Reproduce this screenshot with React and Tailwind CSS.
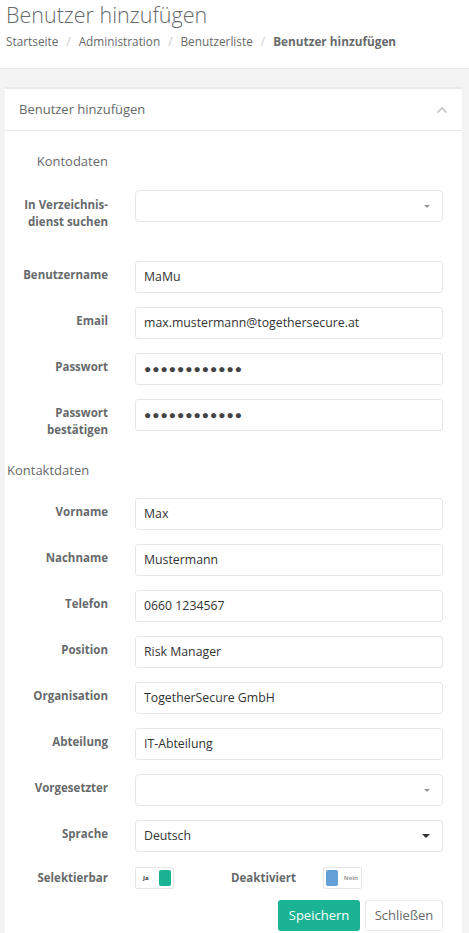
import React from "react";

const font = { fontFamily: '"Open Sans", "Noto Sans", sans-serif' };

function Label({ children, className = "" }) {
  return (
    <div className={"w-[86px] shrink-0 text-right text-[11.5px] font-bold leading-[17px] text-[#676a6c] pt-[5px] whitespace-nowrap " + className}>
      {children}
    </div>
  );
}

function Input({ value, password }) {
  return (
    <div className="flex-1 h-[32px] border border-[#e5e6e7] rounded-[3px] bg-white flex items-center px-[8px] text-[12.3px] text-[#333]">
      {password ? (
        <span className="tracking-[1px] text-[#444] text-[12px]">●●●●●●●●●●●●</span>
      ) : (
        value
      )}
    </div>
  );
}

function Row({ label, children, className = "" }) {
  return (
    <div className={"flex gap-[27px] " + className}>
      <Label>{label}</Label>
      {children}
    </div>
  );
}

function Select({ value, dark }) {
  return (
    <div className="flex-1 h-[32px] border border-[#e5e6e7] rounded-[4px] bg-white flex items-center justify-between pl-[8px] pr-[12px] text-[12.3px] text-[#333]">
      <span>{value}</span>
      {dark ? (
        <span className="w-0 h-0 border-l-[4px] border-r-[4px] border-t-[4px] border-l-transparent border-r-transparent border-t-[#333]"></span>
      ) : (
        <span className="w-0 h-0 border-l-[3px] border-r-[3px] border-t-[3px] border-l-transparent border-r-transparent border-t-[#999]"></span>
      )}
    </div>
  );
}

export default function App() {
  return (
    <div style={font} className="w-[469px] min-h-[933px] bg-[#f3f3f4]">
      <div className="bg-white border-b border-[#e7eaec] h-[69px] px-[6px]">
        <h2 className="text-[21.5px] font-light text-[#676a6c] leading-[28px] pt-[1px]">Benutzer hinzufügen</h2>
        <div className="flex items-center text-[11.8px] text-[#676a6c] mt-[4px] leading-[16px]">
          <span>Startseite</span>
          <span className="px-[8px] text-[#ccc]">/</span>
          <span>Administration</span>
          <span className="px-[8px] text-[#ccc]">/</span>
          <span>Benutzerliste</span>
          <span className="px-[8px] text-[#ccc]">/</span>
          <span className="font-bold">Benutzer hinzufügen</span>
        </div>
      </div>
      <div className="ml-[5px] mr-[7px] mt-[18px] bg-white border-t-[2px] border-[#e7eaec]">
        <div className="h-[42px] border-b border-[#e7eaec] flex items-center justify-between pl-[14px] pr-[14px]">
          <span className="text-[13px] text-[#676a6c]">Benutzer hinzufügen</span>
          <svg width="12" height="8" viewBox="0 0 12 8" fill="none">
            <path d="M1.5 6.5L6 2l4.5 4.5" stroke="#c4c4c4" strokeWidth="1.6" />
          </svg>
        </div>
        <div className="pl-[17px] pr-[19px] pt-[20px] pb-[3px]">
          <div className="flex gap-[27px]">
            <div className="w-[86px] shrink-0 text-right text-[13px] text-[#676a6c] leading-[20px]">Kontodaten</div>
          </div>
          <div className="flex gap-[27px] mt-[19px]">
            <Label className="pt-[6px]">In Verzeichnis-<br />dienst suchen</Label>
            <Select value="" />
          </div>
          <Row label="Benutzername" className="mt-[31px]"><Input value="MaMu" /></Row>
          <Row label="Email" className="mt-[14px]"><Input value="max.mustermann@togethersecure.at" /></Row>
          <Row label="Passwort" className="mt-[14px]"><Input password /></Row>
          <Row label={<>Passwort<br />bestätigen</>} className="mt-[14px]"><Input password /></Row>
          <div className="mt-[22px] -ml-[15px] text-[13px] text-[#676a6c] leading-[20px]">Kontaktdaten</div>
          <Row label="Vorname" className="mt-[18px]"><Input value="Max" /></Row>
          <Row label="Nachname" className="mt-[14px]"><Input value="Mustermann" /></Row>
          <Row label="Telefon" className="mt-[14px]"><Input value="0660 1234567" /></Row>
          <Row label="Position" className="mt-[14px]"><Input value="Risk Manager" /></Row>
          <Row label="Organisation" className="mt-[14px]"><Input value="TogetherSecure GmbH" /></Row>
          <Row label="Abteilung" className="mt-[14px]"><Input value="IT-Abteilung" /></Row>
          <Row label="Vorgesetzter" className="mt-[14px]"><Select value="" /></Row>
          <Row label="Sprache" className="mt-[14px]"><Select value="Deutsch" dark /></Row>
          <div className="flex gap-[27px] mt-[15px] items-center">
            <div className="w-[86px] shrink-0 text-right text-[11.5px] font-bold text-[#676a6c]">Selektierbar</div>
            <div className="w-[39px] h-[22px] border border-[#e5e6e7] rounded-[2px] flex items-center justify-between pl-[7px] pr-[2px]">
              <span className="text-[6px] font-bold text-[#333]">Ja</span>
              <span className="w-[12px] h-[16px] rounded-[2px] bg-[#1ab394]"></span>
            </div>
            <div className="w-[68px] text-right text-[11.5px] font-bold text-[#676a6c] ml-[27px]">Deaktiviert</div>
            <div className="w-[39px] h-[22px] border border-[#e5e6e7] rounded-[2px] flex items-center justify-between pl-[2px] pr-[3px]">
              <span className="w-[12px] h-[16px] rounded-[2px] bg-[#62a0d6]"></span>
              <span className="text-[6px] font-bold text-[#999]">Nein</span>
            </div>
          </div>
          <div className="flex justify-end gap-[5px] mt-[11px]">
            <button className="h-[31px] w-[82px] rounded-[3px] bg-[#1ab394] text-white text-[13px]">Speichern</button>
            <button className="h-[31px] w-[78px] rounded-[3px] bg-white border border-[#e7eaec] text-[#676a6c] text-[13px]">Schließen</button>
          </div>
        </div>
      </div>
    </div>
  );
}
